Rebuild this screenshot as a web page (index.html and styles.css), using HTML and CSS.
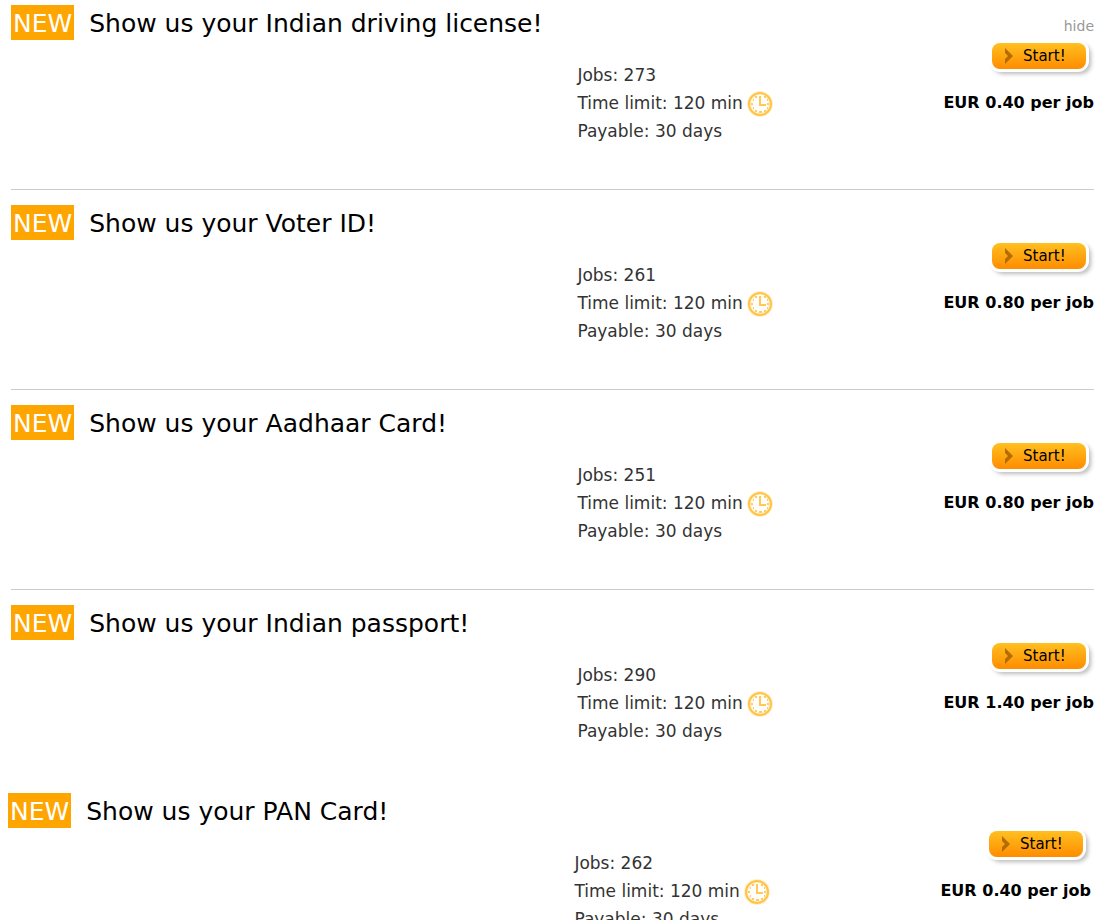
FILE: index.html
```html
<!DOCTYPE html>
<html lang="en">
<head>
    <meta charset="UTF-8">
    <meta name="viewport" content="width=device-width, initial-scale=1.0">
    <title>Jobs</title>
    <link rel="stylesheet" href="styles.css">
</head>
<body>
    <!-- shared icons -->
    <svg class="sprite" aria-hidden="true">
        <symbol id="clock" viewBox="0 0 26 26">
            <circle cx="13" cy="13" r="11" fill="#fffefa" stroke="#fff0cc" stroke-width="4"/>
            <circle cx="13" cy="13" r="11" fill="none" stroke="#ffc445" stroke-width="2"/>
            <path d="M13 5v9h6" fill="none" stroke="#ffc957" stroke-width="2"/>
            <path d="M4 13h2M20 13h2M12 21h3M8 6h2M17 6h2M6 9h1M20 9h1M6 17h1M20 17h1M8 20h2M17 20h2" fill="none" stroke="#ffca66" stroke-width="2"/>
        </symbol>
        <symbol id="arrow" viewBox="0 0 10 16">
            <path d="M1 0l2 2 6 6-6 6-2 2v-5l3-3-3-3z" fill="#b36c00"/>
        </symbol>
    </svg>

    <main class="jobs">
        <article class="job">
            <header class="job-header">
                <span class="badge">NEW</span>
                <h2>Show us your Indian driving license!</h2>
                <a class="hide" href="#">hide</a>
            </header>
            <div class="job-body">
                <div class="info">
                    <p>Jobs: 273</p>
                    <p>Time limit: 120 min <svg class="clock"><use href="#clock"/></svg></p>
                    <p>Payable: 30 days</p>
                </div>
                <div class="action">
                    <button class="start"><svg class="arrow"><use href="#arrow"/></svg>Start!</button>
                    <p class="price">EUR 0.40 per job</p>
                </div>
            </div>
        </article>

        <article class="job">
            <header class="job-header">
                <span class="badge">NEW</span>
                <h2>Show us your Voter ID!</h2>
            </header>
            <div class="job-body">
                <div class="info">
                    <p>Jobs: 261</p>
                    <p>Time limit: 120 min <svg class="clock"><use href="#clock"/></svg></p>
                    <p>Payable: 30 days</p>
                </div>
                <div class="action">
                    <button class="start"><svg class="arrow"><use href="#arrow"/></svg>Start!</button>
                    <p class="price">EUR 0.80 per job</p>
                </div>
            </div>
        </article>

        <article class="job">
            <header class="job-header">
                <span class="badge">NEW</span>
                <h2>Show us your Aadhaar Card!</h2>
            </header>
            <div class="job-body">
                <div class="info">
                    <p>Jobs: 251</p>
                    <p>Time limit: 120 min <svg class="clock"><use href="#clock"/></svg></p>
                    <p>Payable: 30 days</p>
                </div>
                <div class="action">
                    <button class="start"><svg class="arrow"><use href="#arrow"/></svg>Start!</button>
                    <p class="price">EUR 0.80 per job</p>
                </div>
            </div>
        </article>

        <article class="job">
            <header class="job-header">
                <span class="badge">NEW</span>
                <h2>Show us your Indian passport!</h2>
            </header>
            <div class="job-body">
                <div class="info">
                    <p>Jobs: 290</p>
                    <p>Time limit: 120 min <svg class="clock"><use href="#clock"/></svg></p>
                    <p>Payable: 30 days</p>
                </div>
                <div class="action">
                    <button class="start"><svg class="arrow"><use href="#arrow"/></svg>Start!</button>
                    <p class="price">EUR 1.40 per job</p>
                </div>
            </div>
        </article>
    </main>

    <section class="jobs jobs-more">
        <article class="job">
            <header class="job-header">
                <span class="badge">NEW</span>
                <h2>Show us your PAN Card!</h2>
            </header>
            <div class="job-body">
                <div class="info">
                    <p>Jobs: 262</p>
                    <p>Time limit: 120 min <svg class="clock"><use href="#clock"/></svg></p>
                    <p>Payable: 30 days</p>
                </div>
                <div class="action">
                    <button class="start"><svg class="arrow"><use href="#arrow"/></svg>Start!</button>
                    <p class="price">EUR 0.40 per job</p>
                </div>
            </div>
        </article>
    </section>
</body>
</html>
```
FILE: styles.css
```css
body {
    margin: 0;
    background-color: #fff;
    color: #333;
    font-family: Verdana, "DejaVu Sans", sans-serif;
    font-size: 16px;
    line-height: 28px;
}

h2,
p {
    margin: 0;
}

.sprite {
    display: none;
}

/* job list */
.jobs {
    padding: 5px 6px 0 11px;
}

.jobs-more {
    padding: 4px 9px 0 8px;
}

.job {
    padding-bottom: 44px;
}

.job + .job {
    padding-top: 15px;
    border-top: 1px solid #ccc;
}

.job-header {
    display: flex;
    align-items: center;
    gap: 15px;
}

.badge {
    padding: 3px 2px 0;
    background-color: #ffa500;
    color: #fff;
    font-size: 25px;
    line-height: 32px;
}

h2 {
    padding-top: 3px;
    color: #000;
    font-size: 25px;
    font-weight: normal;
    line-height: 32px;
}

.hide {
    margin-left: auto;
    padding-top: 6px;
    color: #999;
    font-size: 14px;
    text-decoration: none;
}

/* details and start button */
.job-body {
    display: flex;
    justify-content: space-between;
    padding-left: 52.3%;
}

.info {
    padding-top: 21px;
    font-size: 17px;
}

.info p {
    display: flex;
    align-items: center;
    gap: 4px;
    height: 28px;
}

.clock {
    width: 26px;
    height: 26px;
    margin-bottom: -2px;
}

.action {
    display: flex;
    flex-direction: column;
    align-items: flex-end;
    gap: 20px;
    padding-top: 3px;
}

.start {
    display: flex;
    align-items: center;
    gap: 9px;
    width: 94px;
    height: 26px;
    margin-right: 8px;
    padding: 0 0 0 12px;
    border: none;
    border-radius: 8px;
    background: linear-gradient(#ffc020, #ff8c00);
    box-shadow: 0 0 0 3px #fff, 3px 3px 4px 2px #bbb;
    color: #000;
    font-family: inherit;
    font-size: 15px;
    cursor: pointer;
}

.arrow {
    width: 10px;
    height: 16px;
}

.price {
    color: #000;
    font-weight: bold;
}
```
